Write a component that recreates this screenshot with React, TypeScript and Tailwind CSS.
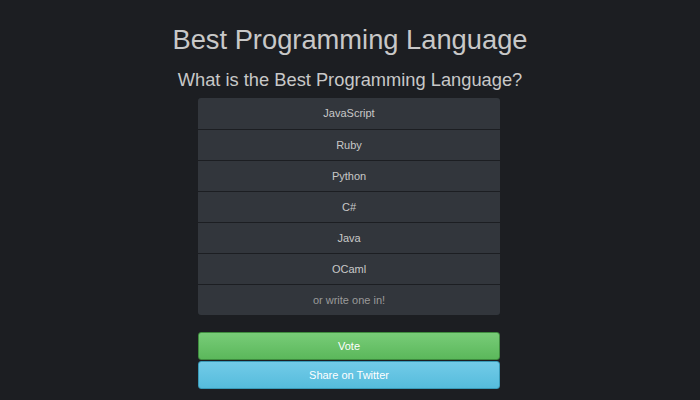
const options = ["JavaScript", "Ruby", "Python", "C#", "Java", "OCaml"];

export default function App() {
  return (
    <div className="w-[700px] h-[400px] bg-[#1c1e22] text-[#c8c8c8] font-['Liberation_Sans',Arial,sans-serif] flex flex-col items-center overflow-hidden">
      <h1 className="mt-[23px] text-[27.3px] leading-[34px] text-[#c8c8c8]">Best Programming Language</h1>
      <h2 className="mt-[12px] text-[18.3px] leading-[22px] text-[#c8c8c8]">What is the Best Programming Language?</h2>
      <div className="mt-[7px] mr-[2px] w-[302px] rounded-[3px] overflow-hidden flex flex-col gap-px bg-[#1c1e22]">
        {options.map((o, i) => (
          <div
            key={o}
            className={`${i === 0 ? "h-[31px]" : "h-[30px]"} bg-[#32363c] flex items-center justify-center text-[11px] text-[#c8c8c8]`}
          >
            {o}
          </div>
        ))}
        <div className="h-[30px] bg-[#32363c] flex items-center justify-center text-[11px] text-[#9a9a9a]">
          or write one in!
        </div>
      </div>
      <button className="mt-[17px] mr-[2px] w-[302px] h-[28px] rounded-[3px] border border-[#3f8c3f] bg-gradient-to-b from-[#78cc78] to-[#5bb85b] text-white text-[11px]">
        Vote
      </button>
      <button className="mt-px mr-[2px] w-[302px] h-[28px] rounded-[3px] border border-[#3a9ab8] bg-gradient-to-b from-[#72cbe8] to-[#55bcdc] text-white text-[11px]">
        Share on Twitter
      </button>
    </div>
  );
}
